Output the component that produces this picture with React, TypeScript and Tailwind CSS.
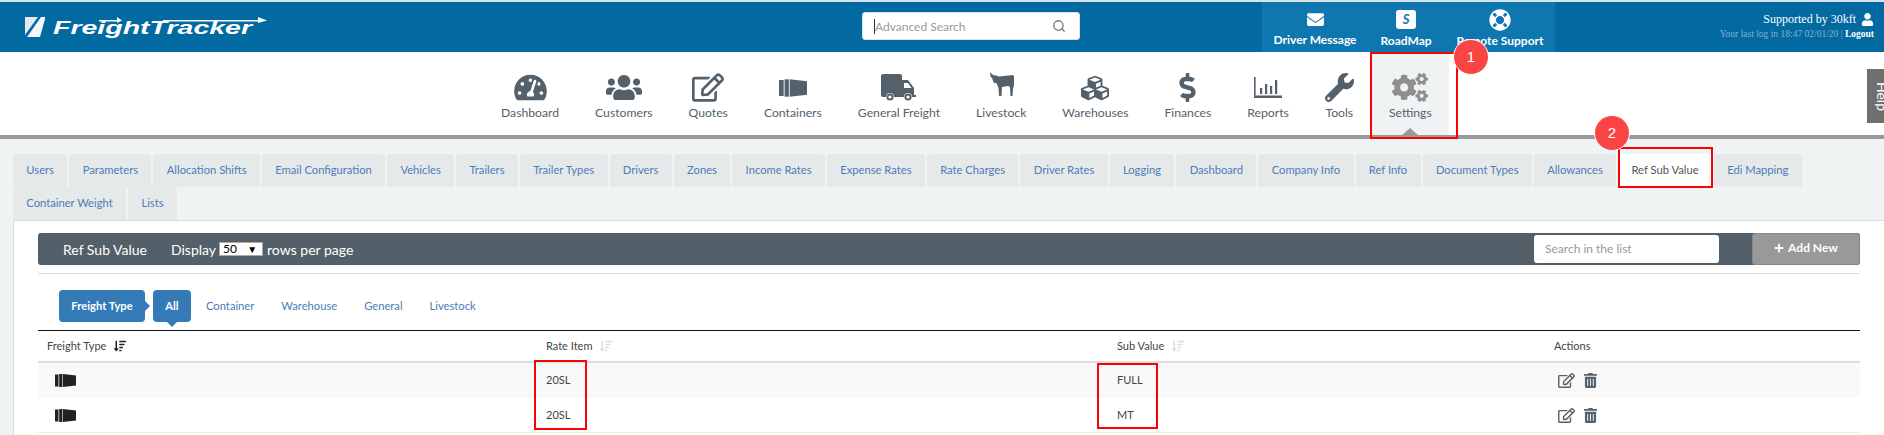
import { Search } from 'lucide-react';
import type { ReactNode } from 'react';
import {
  FaCogs,
  FaCubes,
  FaDollarSign,
  FaEnvelope,
  FaLifeRing,
  FaPlus,
  FaRegEdit,
  FaSortAmountDown,
  FaTachometerAlt,
  FaTrashAlt,
  FaUser,
  FaUsers,
  FaWrench,
} from 'react-icons/fa';

function ContainerIcon({ className }: { className: string }) {
  return (
    <svg viewBox="0 0 21 13" className={className} fill="currentColor">
      <rect x="0" y="0.5" width="3.5" height="12" />
      <rect x="4.2" y="0" width="3.2" height="13" />
      <path d="M8 0 L21 1.5 V11.5 L8 13 Z" />
    </svg>
  );
}

function TruckIcon({ className }: { className: string }) {
  return (
    <svg viewBox="0 0 35 27" className={className}>
      <path
        d="M2 0 H19 Q21 0 21 2 V6 H27 L33 14 V21 H35 V23 H2 Q0 23 0 21 V2 Q0 0 2 0 Z"
        fill="currentColor"
      />
      <path d="M23 9 H27 L30.5 14 H23 Z" fill="#ffffff" />
      <circle cx="9" cy="23" r="4" fill="#ffffff" />
      <circle cx="9" cy="23" r="3.6" fill="currentColor" />
      <circle cx="9" cy="23" r="1.6" fill="#ffffff" />
      <circle cx="27" cy="23" r="4" fill="#ffffff" />
      <circle cx="27" cy="23" r="3.6" fill="currentColor" />
      <circle cx="27" cy="23" r="1.6" fill="#ffffff" />
    </svg>
  );
}

function CowIcon({ className }: { className: string }) {
  return (
    <svg viewBox="0 0 25 24" className={className} fill="currentColor">
      <path d="M1 0 L4 3 L7 3.5 L10 4.5 L24 3 L25 4.5 L25 13 L24 17 L23.5 24 L21.5 24 L21 15 L19 14 L13 15 L12.5 24 L10 24 L9.5 16 L7.5 11 L5 11 L3 6 L1.5 4.5 Z" />
    </svg>
  );
}

function ReportIcon({ className }: { className: string }) {
  return (
    <svg viewBox="0 0 28 21" className={className} fill="currentColor">
      <path d="M0 0h1.6v18.6H28V21H0z" />
      <rect x="6" y="11" width="2.2" height="6" />
      <rect x="11" y="7" width="2.2" height="10" />
      <rect x="16" y="9" width="2.2" height="8" />
      <rect x="21" y="3" width="2.2" height="14" />
    </svg>
  );
}

function LogoMark() {
  return (
    <svg viewBox="0 0 20 20" className="h-5 w-5 shrink-0">
      <path d="M0 0 H13 L0 18 Z" fill="#e4ebef" />
      <path d="M16 0 H20 V2 L15 20 H2 Z" fill="#f4f6f7" />
    </svg>
  );
}

function LogoArrows() {
  return (
    <svg viewBox="0 0 214 22" className="absolute left-[53px] top-[14px] h-[22px] w-[214px]" fill="#ffffff">
      <path d="M46 6 H64 V3 L69 6.5 L64 9 V7.5 H46 Z" />
      <path d="M110 6 H205 V3 L214 6.5 L205 9 V7.5 H110 Z" />
    </svg>
  );
}

const navItems: { label: string; icon: ReactNode }[] = [
  { label: 'Dashboard', icon: <FaTachometerAlt className="h-[29px] w-[33px]" /> },
  { label: 'Customers', icon: <FaUsers className="h-[29px] w-[36px]" /> },
  { label: 'Quotes', icon: <FaRegEdit className="h-[29px] w-[32px]" /> },
  { label: 'Containers', icon: <ContainerIcon className="h-[18px] w-[28px]" /> },
  { label: 'General Freight', icon: <TruckIcon className="h-[27px] w-[35px]" /> },
  { label: 'Livestock', icon: <CowIcon className="mb-[8px] h-[24px] w-[25px]" /> },
  { label: 'Warehouses', icon: <FaCubes className="h-[28px] w-[28px]" /> },
  { label: 'Finances', icon: <FaDollarSign className="h-[29px] w-[17px]" /> },
  { label: 'Reports', icon: <ReportIcon className="h-[21px] w-[28px]" /> },
  { label: 'Tools', icon: <FaWrench className="h-[29px] w-[29px]" /> },
];

const tabsRowOne = [
  'Users',
  'Parameters',
  'Allocation Shifts',
  'Email Configuration',
  'Vehicles',
  'Trailers',
  'Trailer Types',
  'Drivers',
  'Zones',
  'Income Rates',
  'Expense Rates',
  'Rate Charges',
  'Driver Rates',
  'Logging',
  'Dashboard',
  'Company Info',
  'Ref Info',
  'Document Types',
  'Allowances',
  'Ref Sub Value',
  'Edi Mapping',
];

const rows = [
  { rate: '20SL', sub: 'FULL' },
  { rate: '20SL', sub: 'MT' },
];

function Tab({ label }: { label: string }) {
  const active = label === 'Ref Sub Value';
  return (
    <a
      className={
        active
          ? 'flex h-[33px] items-center rounded-t bg-white px-[13.35px] text-[11.2px] text-[#555555]'
          : 'flex h-[33px] items-center rounded-t bg-[#e6e9ea] px-[13.35px] text-[11.2px] text-[#4c7db8]'
      }
    >
      {label}
    </a>
  );
}

function SortIcon({ active }: { active?: boolean }) {
  return <FaSortAmountDown className={active ? 'ml-2 h-3 w-3 text-[#222222]' : 'ml-2 h-3 w-3 text-[#dddddd]'} />;
}

export default function App() {
  return (
    <div className="relative h-[435px] w-[1884px] overflow-hidden bg-[#eff3f4] font-['Lato',sans-serif]">
      <div className="h-[2px] bg-[#d7e4ea]" />
      <header className="relative flex h-[50px] items-stretch bg-[#0269a1]">
        <div className="flex w-[862px] items-center gap-2 pl-[25px]">
          <LogoMark />
          <span className="origin-left scale-x-[1.5] font-['Liberation_Sans',sans-serif] text-[19px] font-bold italic leading-none text-white">
            FreightTracker
          </span>
        </div>
        <div className="mt-[10px] flex h-[28px] w-[218px] items-center justify-between rounded-[3px] border border-[#d5e3ec] bg-white pl-[11px] pr-[13px] text-[12px] text-[#9a9a9a]">
          <span className="border-l border-[#333333] leading-[15px]">Advanced Search</span>
          <Search className="h-[14px] w-[14px] text-[#777777]" strokeWidth={2.2} />
        </div>
        <div className="ml-[182px] flex w-[293px] bg-[#0f77b0] pl-[10px] text-[12px] font-bold text-white">
          <div className="flex w-[86px] flex-col items-center pt-[9px]">
            <FaEnvelope className="h-[17px] w-[23px]" />
            <span className="mt-[4px] whitespace-nowrap leading-[15px]">Driver Message</span>
          </div>
          <div className="ml-[10px] flex w-[76px] flex-col items-center pt-[8px]">
            <div className="flex h-[19px] w-[20px] items-center justify-center rounded-[3px] bg-white text-[13px] italic text-[#0f77b0]">
              S
            </div>
            <span className="mt-[4px] whitespace-nowrap leading-[15px]">RoadMap</span>
          </div>
          <div className="ml-[11px] flex w-[90px] flex-col items-center pt-[7px]">
            <FaLifeRing className="h-[22px] w-[22px]" />
            <span className="mt-[2px] whitespace-nowrap leading-[15px]">Remote Support</span>
          </div>
        </div>
        <div className="flex flex-1 flex-col items-end pr-[10px] pt-[9px] font-['Liberation_Serif',serif]">
          <div className="flex items-center gap-[5px] text-[12px] leading-[16px] text-white">
            <span>Supported by 30kft</span>
            <FaUser className="h-[13px] w-[13px]" />
          </div>
          <div className="mt-[1px] text-[9.5px] leading-[12px] text-[#83b3cf]">
            Your last log in 18:47 02/01/20 | <b className="text-white">Logout</b>
          </div>
        </div>
      </header>
      <LogoArrows />

      <nav className="flex h-[83px] items-stretch bg-white pl-[483px] text-[12.2px] text-[#54616b]">
        {navItems.map(item => (
          <div key={item.label} className="flex flex-col items-center px-[18px]">
            <div className="mt-[21px] flex h-[29px] items-center">{item.icon}</div>
            <span className="mt-[2px] whitespace-nowrap leading-[17px]">{item.label}</span>
          </div>
        ))}
        <div className="relative flex w-[77px] flex-col items-center bg-[#eff3f4]">
          <div className="mt-[21px] flex h-[29px] items-center">
            <FaCogs className="h-[29px] w-[36px] text-[#8f8f8f]" />
          </div>
          <span className="mt-[2px] leading-[17px]">Settings</span>
          <div className="absolute bottom-0 left-1/2 h-0 w-0 -translate-x-1/2 border-x-[8px] border-b-[7px] border-x-transparent border-b-[#999999]" />
        </div>
      </nav>
      <div className="h-[4px] bg-[#999999]" />

      <div className="pl-[13px] pt-[15px]">
        <div className="flex w-[1810px] flex-wrap gap-x-[2px]">
          {tabsRowOne.map(tab => (
            <Tab key={tab} label={tab} />
          ))}
        </div>
        <div className="flex gap-x-[2px]">
          <Tab label="Container Weight" />
          <Tab label="Lists" />
        </div>
      </div>

      <section className="ml-[13px] h-[220px] border-l border-t border-[#dddddd] bg-white pl-[24px] pt-[12px]">
        <div className="flex h-[32px] w-[1822px] items-center rounded-[3px] bg-[#536069] text-white">
          <span className="ml-[25px] text-[14px]">Ref Sub Value</span>
          <span className="ml-[24px] text-[14px]">Display</span>
          <span className="ml-[3px] flex h-[14px] w-[44px] items-center justify-between border border-[#aaaaaa] bg-white pl-[3px] pr-[5px] text-[12px] leading-none text-black">
            50 <span className="text-[10px]">▼</span>
          </span>
          <span className="ml-[4px] text-[14px]">rows per page</span>
          <div className="ml-auto mr-[33px] flex h-[28px] w-[185px] items-center rounded-[3px] bg-white pl-[11px] text-[12px] text-[#999999]">
            Search in the list
          </div>
          <div className="flex h-[32px] w-[108px] items-center justify-center gap-1 rounded-[3px] border border-[#888888] bg-[#999999] pb-[3px] text-[12px] font-bold">
            <FaPlus className="h-[10px] w-[10px]" /> Add New
          </div>
        </div>
        <div className="mt-[8px] h-px w-[1822px] bg-[#dddddd]" />

        <div className="mt-[16px] flex h-[32px] items-center pl-[21px] text-[11.2px]">
          <div className="relative flex h-[32px] w-[86px] items-center justify-center rounded-[4px] bg-[#337ab7] font-bold text-white">
            Freight Type
            <div className="absolute -right-[5px] top-[11px] h-0 w-0 border-y-[5px] border-l-[5px] border-y-transparent border-l-[#337ab7]" />
          </div>
          <div className="relative ml-[8px] flex h-[32px] w-[38px] items-center justify-center rounded-[4px] bg-[#337ab7] font-bold text-white">
            All
            <div className="absolute -bottom-[5px] left-[14px] h-0 w-0 border-x-[5px] border-t-[5px] border-x-transparent border-t-[#337ab7]" />
          </div>
          <a className="ml-[15px] text-[#4c7db8]">Container</a>
          <a className="ml-[27px] text-[#4c7db8]">Warehouse</a>
          <a className="ml-[27px] text-[#4c7db8]">General</a>
          <a className="ml-[27px] text-[#4c7db8]">Livestock</a>
        </div>

        <div className="mt-[8px] w-[1822px] border-t border-[#111111] text-[11px] text-[#444444]">
          <div className="grid h-[32px] grid-cols-[499px_571px_437px_315px] items-center border-b-[2px] border-[#dddddd]">
            <div className="flex items-center pl-[9px]">
              Freight Type <SortIcon active />
            </div>
            <div className="flex items-center pl-[9px]">
              Rate Item <SortIcon />
            </div>
            <div className="flex items-center pl-[9px]">
              Sub Value <SortIcon />
            </div>
            <div className="pl-[9px]">Actions</div>
          </div>
          {rows.map((row, i) => (
            <div
              key={row.sub}
              className={
                i === 0
                  ? 'grid h-[35px] grid-cols-[499px_571px_437px_315px] items-center bg-[#f9f9f9]'
                  : 'grid h-[35px] grid-cols-[499px_571px_437px_315px] items-center border-b border-[#eeeeee]'
              }
            >
              <div className="pl-[17px] text-[#222222]">
                <ContainerIcon className="h-[13px] w-[21px]" />
              </div>
              <div className="pl-[9px]">{row.rate}</div>
              <div className="pl-[9px]">{row.sub}</div>
              <div className="flex items-center gap-[9px] pl-[13px] text-[#54616b]">
                <FaRegEdit className="h-[15px] w-[17px]" />
                <FaTrashAlt className="h-[15px] w-[13px]" />
              </div>
            </div>
          ))}
        </div>
      </section>

      {/* callouts drawn over the screenshot */}
      <div className="absolute left-[1370px] top-[52px] h-[87px] w-[88px] border-2 border-[#ff0000]" />
      <div className="absolute left-[1618px] top-[147px] h-[41px] w-[95px] border-2 border-[#ff0000]" />
      <div className="absolute left-[534px] top-[360px] h-[70px] w-[53px] border-2 border-[#ff0000]" />
      <div className="absolute left-[1097px] top-[363px] h-[66px] w-[61px] border-2 border-[#ff0000]" />
      <div className="absolute left-[1453px] top-[39px] flex h-[36px] w-[36px] items-center justify-center rounded-full border border-white bg-[#fb4444] font-['Liberation_Sans',sans-serif] text-[15px] text-white">
        1
      </div>
      <div className="absolute left-[1594px] top-[115px] flex h-[36px] w-[36px] items-center justify-center rounded-full border border-white bg-[#fb4444] font-['Liberation_Sans',sans-serif] text-[15px] text-white">
        2
      </div>
      <div className="absolute left-[1867px] top-[69px] h-[54px] w-[17px] overflow-hidden bg-[#6f6f6f]">
        <span className="ml-[8px] mt-[13px] block text-[14px] leading-none text-white [writing-mode:vertical-rl]">
          Help
        </span>
      </div>
    </div>
  );
}
